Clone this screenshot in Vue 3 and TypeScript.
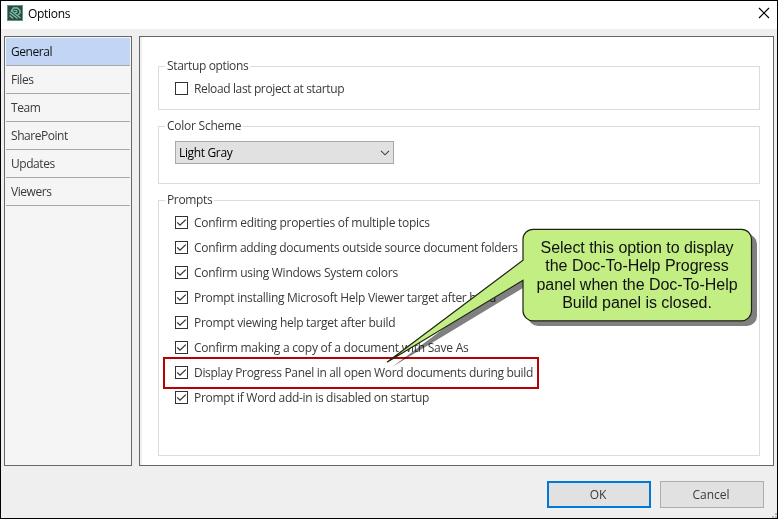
<script setup lang="ts">
import { ref } from 'vue'

interface Option { label: string; spacing: number; highlighted?: boolean }

const sections = ['General', 'Files', 'Team', 'SharePoint', 'Updates', 'Viewers']
const active = ref('General')
const reload = ref(false)
const prompts: Option[] = [
  { label: 'Confirm editing properties of multiple topics', spacing: -0.27 },
  { label: 'Confirm adding documents outside source document folders', spacing: -0.3 },
  { label: 'Confirm using Windows System colors', spacing: -0.26 },
  { label: 'Prompt installing Microsoft Help Viewer target after build', spacing: -0.29 },
  { label: 'Prompt viewing help target after build', spacing: -0.29 },
  { label: 'Confirm making a copy of a document with Save As', spacing: -0.23 },
  { label: 'Display Progress Panel in all open Word documents during build', spacing: -0.31, highlighted: true },
  { label: 'Prompt if Word add-in is disabled on startup', spacing: -0.3 },
]
const checked = ref(prompts.map(() => true))
const calloutLines = [
  'Select this option to display',
  'the Doc-To-Help Progress',
  'panel when the Doc-To-Help',
  'Build panel is closed.',
]
</script>

<template>
  <div class="window">
    <header class="titlebar">
      <svg class="app-icon" width="16" height="16" viewBox="0 0 16 16">
        <rect x=".5" y=".5" width="15" height="15" fill="#3e4142" stroke="#48a489" />
        <path d="M4 6.500L6.500 3H10.500L13 5.500V8L11 10" fill="none" stroke="#67cbae" stroke-width="1.400" />
        <path d="M2.500 7.500L10.500 13.500M2.500 10.500L6 13.500M4.500 6L13.500 13" fill="none" stroke="#67cbae" stroke-width="1.300" />
        <path d="M6.500 5.500H10V7.500H8" fill="none" stroke="#67cbae" />
      </svg>
      <h1>Options</h1>
      <button class="close" aria-label="Close">
        <svg width="12" height="12" viewBox="0 0 12 12"><path d="M1 1l10 10M11 1L1 11" stroke="#000" stroke-width="1.15" /></svg>
      </button>
    </header>

    <main class="body">
      <nav class="sidebar">
        <button v-for="s in sections" :key="s" :class="['tab', { active: active === s }]" @click="active = s">{{ s }}</button>
      </nav>

      <section class="content">
        <div class="group startup">
          <h2>Startup options</h2>
          <label class="option" @click="reload = !reload">
            <span class="box"><svg v-if="reload" viewBox="0 0 11 11"><path d="M1.5 5.5l2.7 2.7L9.8 2.7" /></svg></span>
            <span class="label reload">Reload last project at startup</span>
          </label>
        </div>
        <div class="group scheme">
          <h2>Color Scheme</h2>
          <button class="select">
            <span>Light Gray</span>
            <svg width="10" height="6" viewBox="0 0 10 6"><path d="M1 .8l4 4 4-4" fill="none" stroke="#444" stroke-width="1.1" /></svg>
          </button>
        </div>
        <div class="group prompts">
          <h2>Prompts</h2>
          <label v-for="(p, i) in prompts" :key="p.label" :class="['option', { highlighted: p.highlighted }]" @click="checked[i] = !checked[i]">
            <span class="box"><svg v-if="checked[i]" viewBox="0 0 11 11"><path d="M1.2 5.4l2.8 2.8L9.8 2.6" /></svg></span>
            <span class="label" :style="{ letterSpacing: p.spacing + 'px' }">{{ p.label }}</span>
          </label>
        </div>
      </section>
    </main>

    <footer class="actions">
      <button class="action primary">OK</button>
      <button class="action">Cancel</button>
    </footer>

    <svg class="grip" width="5" height="5" viewBox="0 0 5 5"><path d="M3 0h2v2H3zM0 3h2v2H0zM3 3h2v2H3z" fill="#b8b8b8" /></svg>

    <svg class="bubble-shadow" width="778" height="519" viewBox="0 0 778 519">
      <path d="M538.5 234H747a10 10 0 0 1 10 10v72a10 10 0 0 1-10 10H538a10 10 0 0 1-10-10v-31L392 367l136-101v-22a10 10 0 0 1 10-10z" fill="#808080" />
    </svg>
    <svg class="bubble" width="778" height="519" viewBox="0 0 778 519">
      <path d="M533.5 229.3H741.5a10 10 0 0 1 10 10v71.5a10 10 0 0 1-10 10H533a10 10 0 0 1-10-10v-30.5L387 362.3l136-102v-21a10 10 0 0 1 10-10z" fill="#c2ee84" stroke="#1c2410" stroke-width="1.2" />
    </svg>
    <div class="bubble-text"><div v-for="line in calloutLines" :key="line">{{ line }}</div></div>
  </div>
</template>

<style>
body { margin: 0; overflow: hidden; }
</style>

<style scoped>
.window {
  position: relative;
  box-sizing: border-box;
  width: 778px;
  height: 519px;
  border: 1px solid #000;
  background: #efefef;
  font: 12px/16px "Open Sans", "Noto Sans", sans-serif;
  color: #3a3a3a;
  display: flex;
  flex-direction: column;
}
button { font: inherit; color: inherit; border: 0; border-radius: 0; background: none; padding: 0; margin: 0; }
h1, h2 { font: inherit; margin: 0; }
.titlebar { height: 28px; background: #fff; display: flex; align-items: center; padding: 0 7px 0 6px; box-sizing: border-box; }
.app-icon { margin-top: -4px; }
.titlebar h1 { color: #000; margin: -3px auto 0 5px; letter-spacing: -.3px; }
.close { height: 12px; display: flex; margin-top: -4px; }
.body { height: 430px; margin: 7px 3px 0; display: flex; gap: 7px; }
.sidebar { box-sizing: border-box; width: 128px; border: 1px solid #666; background: #f5f5f5; padding: 1px; }
.tab { display: block; box-sizing: border-box; width: 100%; height: 28px; border-bottom: 1px solid #a8a8a8; text-align: left; padding-left: 5px; letter-spacing: -.45px; }
.tab.active { background: #c2d5f5; color: #111; }
.content { box-sizing: border-box; width: 635px; border: 1px solid #666; box-shadow: inset 2px 0 #f0f0f0; background: #fff; padding: 29px 13px 9px 18px; display: flex; flex-direction: column; gap: 16px; }
.group { box-sizing: border-box; border: 1px solid #dcdcdc; width: 602px; padding-left: 16px; }
.group h2 { width: max-content; margin: -9px 0 0 -10px; padding: 0 2px; background: #fff; letter-spacing: -.36px; }
.startup { height: 44px; }
.scheme { height: 58px; }
.scheme h2 { letter-spacing: -.25px; }
.prompts { height: 256px; }
.option { display: flex; align-items: center; gap: 6px; width: max-content; height: 25px; white-space: nowrap; }
.startup .option { margin-top: 2px; }
.reload { letter-spacing: -.37px; }
.prompts h2 { margin-bottom: 2px; }
.box { box-sizing: border-box; flex: none; width: 13px; height: 13px; border: 1px solid #333; background: #fff; display: flex; }
.box svg { width: 11px; height: 11px; }
.box path { fill: none; stroke: #333; stroke-width: 1.3; }
.highlighted { box-sizing: border-box; border: 2px solid #b80000; width: 376px; height: 32px; margin: -3px 0 -4px -12px; padding: 0 0 1px 10px; }
.select { box-sizing: border-box; margin-top: 7px; width: 219px; height: 23px; border: 1px solid #a8a8a8; background: #e1e1e1; display: flex; align-items: center; justify-content: space-between; padding: 0 3px; color: #000; letter-spacing: -.35px; }
.actions { display: flex; gap: 9px; justify-content: flex-end; margin: 15px 13px 0 0; }
.action { box-sizing: border-box; width: 104px; height: 27px; border: 1px solid #adadad; background: #e1e1e1; padding-right: 2px; }
.action.primary { border: 2px solid #0078d7; }
.grip { position: absolute; right: 0; bottom: 0; }
.bubble-shadow, .bubble { position: absolute; left: -1px; top: -1px; pointer-events: none; }
.bubble-shadow { mix-blend-mode: multiply; }
.bubble-text { position: absolute; left: 522px; top: 238px; width: 228px; text-align: center; font: 16px/18.3px "Liberation Sans", Arial, sans-serif; letter-spacing: -.03px; color: #111; pointer-events: none; }
</style>
